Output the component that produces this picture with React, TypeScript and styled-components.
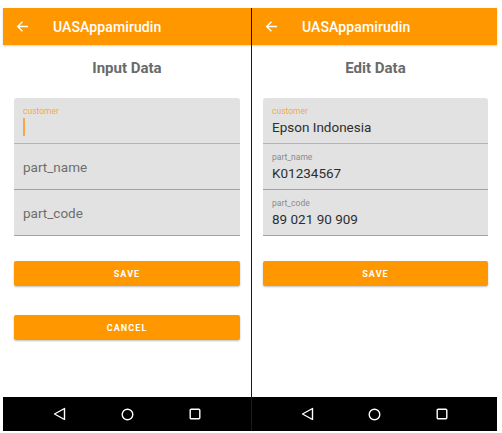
import React from 'react';
import styled, { createGlobalStyle } from 'styled-components';

const GlobalStyle = createGlobalStyle`
  html, body {
    margin: 0;
    padding: 0;
    background: #ffffff;
    font-family: Roboto, "Noto Sans", Arial, sans-serif;
  }
`;

const ORANGE = '#ff9800';

const Page = styled.div`
  display: flex;
  padding: 8px 0 0 3px;
  width: 502px;
  height: 433px;
  box-sizing: border-box;
  overflow: hidden;
`;

const Phone = styled.div<{ $w: number; $divider?: boolean }>`
  width: ${(p) => p.$w}px;
  height: 423px;
  display: flex;
  flex-direction: column;
  background: #fff;
  box-sizing: border-box;
  border-right: ${(p) => (p.$divider ? '1px solid #1a1a1a' : 'none')};
`;

const AppBar = styled.div`
  height: 37px;
  background: ${ORANGE};
  display: flex;
  align-items: center;
  color: #fff;
  box-shadow: 0 1px 2px rgba(0, 0, 0, 0.18);
  flex-shrink: 0;
`;

const BackBtn = styled.div`
  width: 50px;
  display: flex;
  justify-content: center;
  padding-right: 11px;
  box-sizing: border-box;
`;

const AppTitle = styled.div`
  font-size: 14px;
  font-weight: 500;
  letter-spacing: 0.1px;
`;

const Content = styled.div<{ $pr: number }>`
  flex: 1;
  padding: 0 ${(p) => p.$pr}px 0 11px;
  display: flex;
  flex-direction: column;
`;

const Heading = styled.div`
  margin-top: 13px;
  height: 20px;
  line-height: 20px;
  text-align: center;
  font-size: 15px;
  font-weight: 700;
  color: #6a6a6a;
`;

const Form = styled.div`
  margin-top: 20px;
  display: flex;
  flex-direction: column;
  border-radius: 3px 3px 0 0;
  overflow: hidden;
`;

const Field = styled.div<{ $focused?: boolean }>`
  height: 46px;
  box-sizing: border-box;
  background: #e2e2e2;
  border-bottom: 1px solid ${(p) => (p.$focused ? '#f5a84a' : '#a3a3a3')};
  padding: 8px 9px 0 9px;
  display: flex;
  flex-direction: column;
`;

const Label = styled.div<{ $focused?: boolean }>`
  font-size: 8.5px;
  line-height: 10px;
  height: 10px;
  color: ${(p) => (p.$focused ? '#f5a84a' : '#8a8a8a')};
`;

const Value = styled.div`
  margin-top: 2px;
  font-size: 13.5px;
  line-height: 18px;
  color: #2e2e2e;
`;

const Hint = styled.div`
  margin-top: 6px;
  font-size: 13.5px;
  line-height: 18px;
  color: #6e6e6e;
`;

const Cursor = styled.div`
  margin-top: 2px;
  width: 1.5px;
  height: 18px;
  background: #f5a84a;
`;

const Button = styled.div<{ $gap: number }>`
  margin-top: ${(p) => p.$gap}px;
  height: 25px;
  border-radius: 2px;
  background: ${ORANGE};
  color: #fff;
  font-size: 9px;
  font-weight: 700;
  letter-spacing: 1.1px;
  display: flex;
  align-items: center;
  justify-content: center;
  box-shadow: 0 1px 2px rgba(0, 0, 0, 0.25);
`;

const NavBar = styled.div`
  height: 34px;
  background: #000;
  display: grid;
  grid-template-columns: 1fr 1fr 1fr;
  align-items: center;
  justify-items: center;
  padding: 0 22px;
  flex-shrink: 0;
`;

const ArrowLeft = () => (
  <svg width="13" height="13" viewBox="0 0 24 24" fill="none" stroke="#fff" strokeWidth="2.4" strokeLinecap="square">
    <path d="M21 12H4M11 4l-8 8 8 8" />
  </svg>
);

const NavIcons = () => (
  <NavBar>
    <svg width="13" height="14" viewBox="0 0 13 14" fill="none" stroke="#fff" strokeWidth="1.4" strokeLinejoin="round">
      <path d="M11.5 1.5 L1.5 7 L11.5 12.5 Z" />
    </svg>
    <svg width="13" height="13" viewBox="0 0 13 13" fill="none" stroke="#fff" strokeWidth="1.4">
      <circle cx="6.5" cy="6.5" r="5.3" />
    </svg>
    <svg width="12" height="12" viewBox="0 0 12 12" fill="none" stroke="#fff" strokeWidth="1.4">
      <rect x="1.2" y="1.2" width="9.6" height="9.6" rx="1" />
    </svg>
  </NavBar>
);

const Screen = ({ w, pr, divider, children }: { w: number; pr: number; divider?: boolean; children: React.ReactNode }) => (
  <Phone $w={w} $divider={divider}>
    <AppBar>
      <BackBtn>
        <ArrowLeft />
      </BackBtn>
      <AppTitle>UASAppamirudin</AppTitle>
    </AppBar>
    <Content $pr={pr}>{children}</Content>
    <NavIcons />
  </Phone>
);

export default function App() {
  return (
    <>
      <GlobalStyle />
      <Page>
        <Screen w={249} pr={11} divider>
          <Heading>Input Data</Heading>
          <Form>
            <Field $focused>
              <Label $focused>customer</Label>
              <Cursor />
            </Field>
            <Field>
              <Hint>part_name</Hint>
            </Field>
            <Field>
              <Hint>part_code</Hint>
            </Field>
          </Form>
          <Button $gap={25}>SAVE</Button>
          <Button $gap={29}>CANCEL</Button>
        </Screen>
        <Screen w={245} pr={9}>
          <Heading>Edit Data</Heading>
          <Form>
            <Field $focused>
              <Label $focused>customer</Label>
              <Value>Epson Indonesia</Value>
            </Field>
            <Field>
              <Label>part_name</Label>
              <Value>K01234567</Value>
            </Field>
            <Field>
              <Label>part_code</Label>
              <Value>89 021 90 909</Value>
            </Field>
          </Form>
          <Button $gap={25}>SAVE</Button>
        </Screen>
      </Page>
    </>
  );
}
